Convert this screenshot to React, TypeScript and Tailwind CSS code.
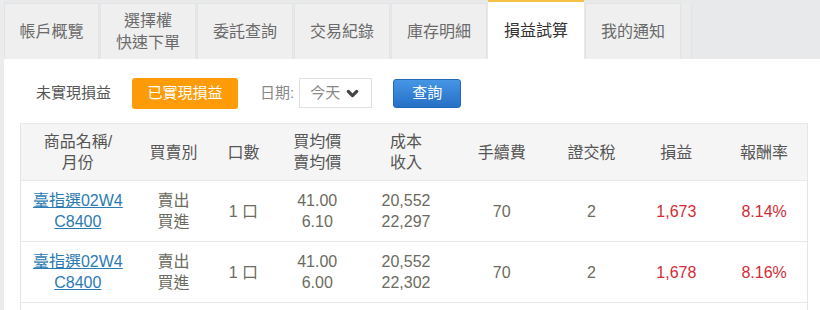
import { ChevronDown } from "lucide-react";

const tabs = [
  { label: ["帳戶概覽"], w: "w-[95px]" },
  { label: ["選擇權", "快速下單"], w: "w-[96px]" },
  { label: ["委託查詢"], w: "w-[96px]" },
  { label: ["交易紀錄"], w: "w-[96px]" },
  { label: ["庫存明細"], w: "w-[96px]" },
  { label: ["損益試算"], w: "w-[96px]", active: true },
  { label: ["我的通知"], w: "w-[96px]" },
];

const cols = ["w-[114px]", "w-[78px]", "w-[62px]", "w-[86px]", "w-[92px]", "w-[100px]", "w-[80px]", "w-[90px]", "w-[86px]"];

const headers = [["商品名稱/", "月份"], ["買賣別"], ["口數"], ["買均價", "賣均價"], ["成本", "收入"], ["手續費"], ["證交稅"], ["損益"], ["報酬率"]];

const rows = [
  { price: ["41.00", "6.10"], amt: ["20,552", "22,297"], pl: "1,673", rate: "8.14%" },
  { price: ["41.00", "6.00"], amt: ["20,552", "22,302"], pl: "1,678", rate: "8.16%" },
];

export default function App() {
  return (
    <div
      className="w-[820px] h-[310px] overflow-hidden bg-[#e8e9eb] flex"
      style={{ fontFamily: '"Liberation Sans", "Noto Sans CJK TC", sans-serif' }}
    >
      <div className="w-[4px] shrink-0 bg-[#ebecee]" />
      <div className="flex-1 flex flex-col">
        {/* Tabs */}
        <div className="h-[59px] flex items-end gap-px">
          {tabs.map((t, i) => (
            <div
              key={i}
              className={
                t.active
                  ? `${t.w} h-[59px] bg-white border-t-2 border-[#f3c244] flex flex-col items-center justify-center text-[16px] leading-[22px] text-[#333]`
                  : `${t.w} h-[56px] bg-[#efefef] border border-b-0 border-[#e3e3e3] flex flex-col items-center justify-center text-[16px] leading-[22px] text-[#6a6a6a]`
              }
            >
              {t.label.map((l) => (
                <span key={l}>{l}</span>
              ))}
            </div>
          ))}
          <div className="w-[10px] h-[56px] bg-[#ebebeb] border-r border-[#e3e3e3]" />
        </div>

        {/* Content */}
        <div className="flex-1 bg-white pl-[16px]">
          <div className="h-[64px] flex items-center pt-[4px]">
            <span className="ml-[16px] text-[15px] text-[#555]">未實現損益</span>
            <button className="ml-[21px] w-[106px] h-[31px] bg-[#fd9b08] rounded-[3px] text-white text-[15px]">已實現損益</button>
            <span className="ml-[22px] text-[15px] text-[#888]">日期:</span>
            <div className="ml-[5px] w-[73px] h-[30px] border border-[#e0e0e0] flex items-center justify-center gap-[4px] text-[15px] text-[#888]">
              今天
              <ChevronDown size={17} strokeWidth={4.5} color="#444" />
            </div>
            <button className="ml-[21px] w-[68px] h-[29px] rounded-[3px] bg-gradient-to-b from-[#4696e5] to-[#2570c6] border border-[#2468b8] text-white text-[15px]">
              查詢
            </button>
          </div>

          <div className="w-[788px] border-x border-[#e5e5e5]">
            <div className="h-[58px] bg-[#f5f5f5] flex border-y border-[#eaeaea]">
              {headers.map((h, i) => (
                <div key={i} className={`${cols[i]} flex flex-col items-center justify-center text-[16px] leading-[21px] text-[#555]`}>
                  {h.map((l) => (
                    <span key={l}>{l}</span>
                  ))}
                </div>
              ))}
            </div>
            {rows.map((r, i) => (
              <div key={i} className="h-[61px] flex border-b border-[#e8e8e8] text-[16px] leading-[21px] text-[#6b6b60]">
                <div className={`${cols[0]} flex flex-col items-center justify-center text-[#2b7bb3] underline`}>
                  <span>臺指選02W4</span>
                  <span>C8400</span>
                </div>
                <div className={`${cols[1]} flex flex-col items-center justify-center`}>
                  <span>賣出</span>
                  <span>買進</span>
                </div>
                <div className={`${cols[2]} flex items-center justify-center`}>1 口</div>
                <div className={`${cols[3]} flex flex-col items-center justify-center`}>
                  <span>{r.price[0]}</span>
                  <span>{r.price[1]}</span>
                </div>
                <div className={`${cols[4]} flex flex-col items-center justify-center`}>
                  <span>{r.amt[0]}</span>
                  <span>{r.amt[1]}</span>
                </div>
                <div className={`${cols[5]} flex items-center justify-center`}>70</div>
                <div className={`${cols[6]} flex items-center justify-center`}>2</div>
                <div className={`${cols[7]} flex items-center justify-center text-[#d42b35]`}>{r.pl}</div>
                <div className={`${cols[8]} flex items-center justify-center text-[#d42b35]`}>{r.rate}</div>
              </div>
            ))}
            <div className="h-[20px]" />
          </div>
        </div>
      </div>
    </div>
  );
}
